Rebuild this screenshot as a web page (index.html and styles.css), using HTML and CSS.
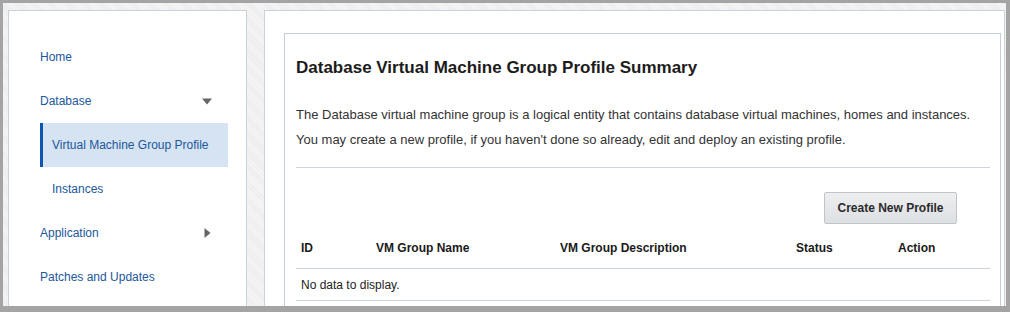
FILE: index.html
```html
<!DOCTYPE html>
<html lang="en">
<head>
<meta charset="utf-8">
<title>Database Virtual Machine Group Profile Summary</title>
<link rel="stylesheet" href="styles.css">
</head>
<body>
<div class="frame">
  <nav class="sidebar">
    <ul class="nav">
      <li class="nav-item"><span>Home</span></li>
      <li class="nav-item"><span>Database</span>
        <svg class="caret" width="10" height="7" viewBox="0 0 10 7"><path d="M0 0.5 H10 L5 6.5 Z" fill="#666"/></svg>
      </li>
      <li class="nav-item sub selected"><span>Virtual Machine Group Profile</span></li>
      <li class="nav-item sub"><span>Instances</span></li>
      <li class="nav-item"><span>Application</span>
        <svg class="caret right" width="7" height="10" viewBox="0 0 7 10"><path d="M0.5 0 V10 L6.5 5 Z" fill="#666"/></svg>
      </li>
      <li class="nav-item"><span>Patches and Updates</span></li>
    </ul>
  </nav>
  <main class="main">
    <section class="card">
      <h1 class="title">Database Virtual Machine Group Profile Summary</h1>
      <p class="desc">The Database virtual machine group is a logical entity that contains database virtual machines, homes and instances.</p>
      <p class="desc">You may create a new profile, if you haven't done so already, edit and deploy an existing profile.</p>
      <hr class="sep">
      <div class="toolbar">
        <button class="btn" type="button">Create New Profile</button>
      </div>
      <div class="table">
        <div class="row head">
          <div class="cell">ID</div>
          <div class="cell">VM Group Name</div>
          <div class="cell">VM Group Description</div>
          <div class="cell">Status</div>
          <div class="cell">Action</div>
        </div>
        <div class="row empty">
          <div class="cell">No data to display.</div>
        </div>
      </div>
    </section>
  </main>
</div>
</body>
</html>
```

FILE: styles.css
```css
* { box-sizing: border-box; }
html, body { margin: 0; padding: 0; }
body {
  background: #a4a4a4;
  font-family: "Liberation Sans", Arial, sans-serif;
  width: 1010px;
  height: 312px;
  overflow: hidden;
}
.frame {
  margin: 3px 4px 0 3px;
  height: 303px;
  padding: 7px 1px 0 5px;
  display: flex;
  align-items: flex-start;
  gap: 17px;
  overflow: hidden;
  background: repeating-linear-gradient(45deg, #ececec 0 1px, #f6f6f6 1px 2px);
}
.sidebar {
  width: 239px;
  flex: none;
  height: 400px;
  background: #fff;
  border: 1px solid #c8d2dc;
  padding: 24px 18px 0 31px;
}
.nav { list-style: none; margin: 0; padding: 0; }
.nav-item {
  height: 44px;
  display: flex;
  align-items: center;
  justify-content: space-between;
  font-size: 12px;
  color: #22579b;
  padding-right: 16px;
}
.nav-item.sub { padding-left: 12px; }
.nav-item.selected {
  background: #d5e3f2;
  border-left: 3px solid #0a56b0;
  padding-left: 9px;
}
.caret { display: block; }
.caret.right { margin-right: 1px; }
.main {
  flex: 1;
  height: 400px;
  background: #fff;
  border: 1px solid #c8d2dc;
  padding: 22px 3px 0 19px;
}
.card {
  border: 1px solid #c6ced8;
  height: 400px;
  padding: 23px 10px 0 11px;
}
.title {
  margin: 0;
  font-size: 17px;
  line-height: 22px;
  font-weight: bold;
  color: #1c1c1c;
}
.desc {
  margin: 0;
  font-size: 13px;
  line-height: 25px;
  color: #333;
}
.title + .desc { margin-top: 23px; }
.sep {
  margin: 15px 0 0;
  border: 0;
  border-top: 1px solid #cdd4db;
  height: 0;
}
.toolbar {
  display: flex;
  justify-content: flex-end;
  padding-right: 33px;
  margin-top: 24px;
}
.btn {
  height: 32px;
  width: 133px;
  padding: 0;
  font-family: inherit;
  font-size: 12px;
  font-weight: bold;
  color: #2b2b2b;
  background: linear-gradient(#eceef0, #dde0e3);
  border: 1px solid #bfc5cb;
  border-radius: 2px;
}
.table { margin-top: 4px; }
.row {
  display: grid;
  grid-template-columns: 75px 184px 236px 102px 1fr;
  align-items: center;
  border-bottom: 1px solid #cbd3db;
}
.row.head { height: 41px; }
.row.empty { height: 32px; grid-template-columns: 1fr; }
.cell {
  padding-left: 5px;
  font-size: 12px;
  color: #222;
}
.head .cell { font-weight: bold; color: #1a1a1a; }
```
